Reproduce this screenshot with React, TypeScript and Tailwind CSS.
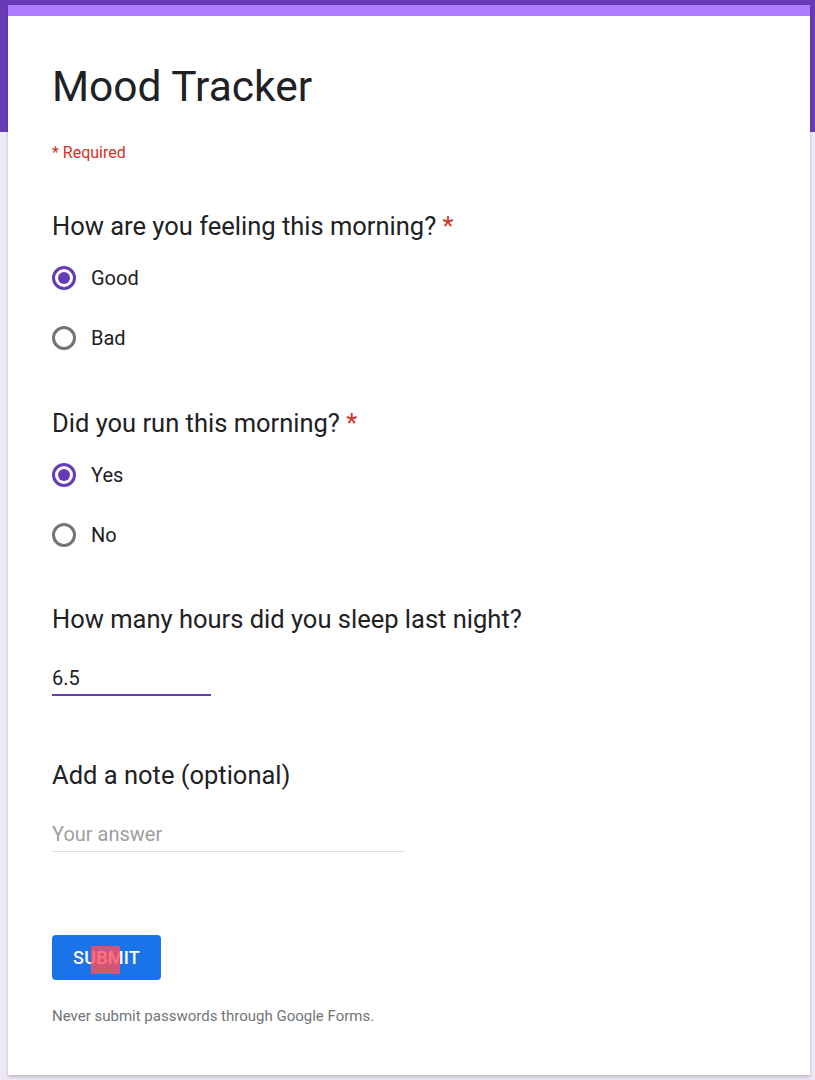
import React from "react";

/* =======================
   DATA
======================= */

const questions = [
  { title: "How are you feeling this morning?", options: ["Good", "Bad"], value: "Good" },
  { title: "Did you run this morning?", options: ["Yes", "No"], value: "Yes" },
];

/* =======================
   PARTS
======================= */

function Radio({ label, checked }: { label: string; checked: boolean }) {
  return (
    <div className="h-[60px] flex items-center">
      <div
        className={`w-[24px] h-[24px] rounded-full border-[3px] flex items-center justify-center ${
          checked ? "border-[#673ab7]" : "border-[#757575]"
        }`}
      >
        {checked && <div className="w-[12px] h-[12px] rounded-full bg-[#673ab7]" />}
      </div>
      <span className="ml-[15px] text-[20px] leading-[28px] text-[#202124]">{label}</span>
    </div>
  );
}

function Question({ title, required }: { title: string; required?: boolean }) {
  return (
    <h2 className="text-[25.5px] leading-[32px] text-[#202124]">
      {title}
      {required && <span className="text-[#d93025]"> *</span>}
    </h2>
  );
}

/* =======================
   APP
======================= */

export default function App() {
  return (
    <div
      className="min-h-[1080px] pt-[5px] bg-[linear-gradient(#673ab7_0,#673ab7_132px,#ede7f6_132px)]"
      style={{ fontFamily: "Roboto, 'Noto Sans', Arial, sans-serif" }}
    >
      <div className="ml-[8px] w-[802px] bg-white border-t-[11px] border-[#ad7bff] shadow-[0_2px_3px_rgba(0,0,0,0.2)] pl-[44px] pb-[49px]">
        <h1 className="pt-[46px] text-[42.5px] leading-[50px] text-[#202124]">Mood Tracker</h1>
        <p className="mt-[31px] text-[16px] leading-[20px] text-[#d93025]">* Required</p>

        {/* RADIO QUESTIONS */}
        <div className="mt-[47px]">
          <Question title={questions[0].title} required />
          <div className="mt-[6px]">
            {questions[0].options.map((o) => (
              <Radio key={o} label={o} checked={o === questions[0].value} />
            ))}
          </div>
        </div>

        <div className="mt-[39px]">
          <Question title={questions[1].title} required />
          <div className="mt-[6px]">
            {questions[1].options.map((o) => (
              <Radio key={o} label={o} checked={o === questions[1].value} />
            ))}
          </div>
        </div>

        {/* SLEEP */}
        <div className="mt-[38px]">
          <Question title="How many hours did you sleep last night?" />
          <div className="mt-[29px] w-[159px] pb-[2px] border-b-2 border-[#673ab7] text-[20px] leading-[28px] text-[#202124]">
            6.5
          </div>
        </div>

        {/* NOTE */}
        <div className="mt-[63px]">
          <Question title="Add a note (optional)" />
          <div className="mt-[29px] w-[353px] pb-[3px] border-b border-[#e0e0e0] text-[20px] leading-[28px] text-[#9e9e9e]">
            Your answer
          </div>
        </div>

        {/* SUBMIT */}
        <div className="mt-[83px] relative w-[109px] h-[45px]">
          <button className="w-full h-full rounded-[4px] bg-[#1a73e8] text-white text-[18px] font-medium tracking-[0.2px]">
            SUBMIT
          </button>
          <div className="absolute left-[39px] top-[11px] w-[29px] h-[28px] bg-[#ff4d5a]/80" />
        </div>

        <p className="mt-[26px] text-[15px] leading-[20px] text-[#70757a]">
          Never submit passwords through Google Forms.
        </p>
      </div>
    </div>
  );
}
